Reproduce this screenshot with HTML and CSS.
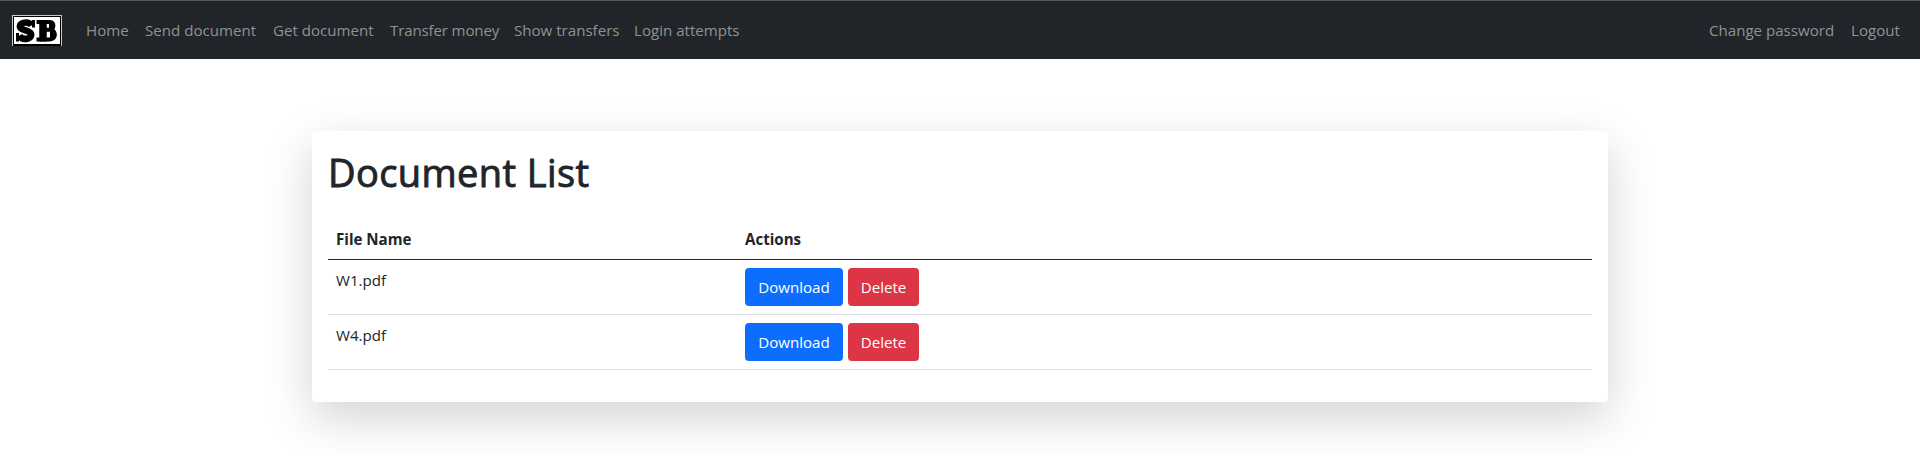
FILE: index.html
```html
<!DOCTYPE html>
<html lang="en">
<head>
<meta charset="utf-8">
<title>Document List</title>
<link rel="stylesheet" href="styles.css">
</head>
<body>
<nav class="navbar">
  <a class="brand" href="#" aria-label="SB">
    <svg width="50" height="31" viewBox="0 0 50 31">
      <rect width="50" height="31" fill="#c8cacc"/>
      <rect x="1" y="1" width="48" height="30" fill="#000"/>
      <rect x="2" y="2" width="46" height="27" fill="#fff"/>
      <g fill="none" stroke="#000">
        <path stroke-width="6.500" d="M19.500 10.500C18 7.500 14 7 11 8C7 9.500 7 12.500 10 14L17 16.800C20.500 18.500 19.500 22.500 16 23.500C12 24.500 9 23.500 7.500 20.500"/>
        <path stroke-width="3" d="M21.500 5V12.500M5.500 18V26.500"/>
        <path stroke-width="7.500" d="M31 5V26.500"/>
        <path stroke-width="4" d="M24.500 7H38C42.500 7 42.500 14 38 14.800H31M38 14.800C44.500 15 44.500 24.500 38 24.500H24.500"/>
        <path stroke-width="5" d="M39.500 7.500V14M40.500 16.500V24"/>
      </g>
    </svg>
  </a>
  <a class="link home" href="#">Home</a>
  <a class="link send" href="#">Send document</a>
  <a class="link get" href="#">Get document</a>
  <a class="link transfer" href="#">Transfer money</a>
  <a class="link show" href="#">Show transfers</a>
  <a class="link login" href="#">Login attempts</a>
  <a class="link password" href="#">Change password</a>
  <a class="link logout" href="#">Logout</a>
</nav>
<main class="card">
  <h1 class="title">Document List</h1>
  <table class="table">
    <thead>
      <tr><th class="name">File Name</th><th class="actions">Actions</th></tr>
    </thead>
    <tbody>
      <tr><td>W1.pdf</td><td><div class="buttons"><a class="btn download" href="#">Download</a><a class="btn delete" href="#">Delete</a></div></td></tr>
      <tr><td>W4.pdf</td><td><div class="buttons"><a class="btn download" href="#">Download</a><a class="btn delete" href="#">Delete</a></div></td></tr>
    </tbody>
  </table>
</main>
</body>
</html>
```
FILE: styles.css
```css
* { box-sizing: border-box; }
body {
  margin: 0;
  min-height: 455px;
  background: #fff;
  color: #212529;
  font: 15.1px/24px "Open Sans", "Noto Sans", sans-serif;
}
a { text-decoration: none; }
.navbar {
  display: flex;
  align-items: center;
  gap: 16px;
  height: 59px;
  padding: 1px 19px 0 12px;
  background: #212529;
  border-top: 1px solid #555759;
}
.brand { height: 31px; margin-right: 8px; }
.brand svg { display: block; }
.link { margin-bottom: 2px; color: #909294; white-space: nowrap; }
.home { width: 43px; }
.send { width: 112px; }
.get { width: 101px; }
.transfer { width: 108px; letter-spacing: -.15px; }
.show { width: 104px; }
.login { width: 106px; }
.password { width: 126px; margin-left: auto; }
.logout { width: 50px; }
.card {
  width: 1296px;
  height: 271px;
  margin: 72px auto 0;
  padding: 16px;
  background: #fff;
  border-radius: 4px;
  box-shadow: 0 16px 48px rgba(0, 0, 0, .175);
}
.title {
  margin: 0 0 24px;
  padding-top: 1px;
  height: 48px;
  font-size: 38px;
  font-weight: 500;
  line-height: 49px;
  letter-spacing: .4px;
  -webkit-text-stroke: .9px #212529;
}
.table {
  width: 100%;
  border-collapse: separate;
  border-spacing: 0;
  table-layout: fixed;
}
th, td {
  padding: 8px;
  border-bottom: 1px solid #dee2e6;
  text-align: left;
  vertical-align: top;
}
th { border-bottom-color: #212529; font-weight: 700; }
.name { width: 409px; }
.buttons { display: flex; gap: 5px; }
.btn {
  height: 38px;
  border-radius: 4px;
  color: #fff;
  line-height: 38px;
  text-align: center;
}
.download { width: 98px; background: #0d6efd; }
.delete { width: 71px; background: #dc3545; }
```
